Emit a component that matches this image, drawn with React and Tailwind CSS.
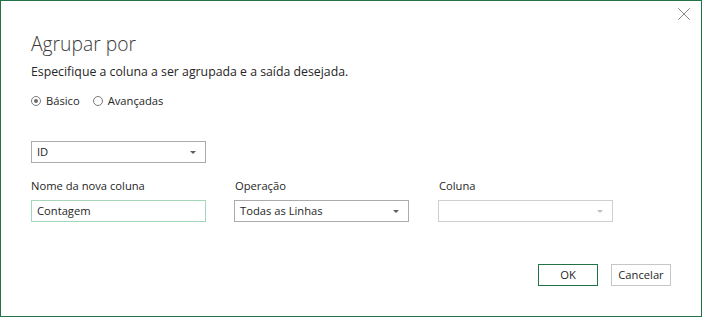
import { X } from "lucide-react";

const Arrow = ({ color = "#5f5f5f" }) => (
    <svg width="6" height="3" viewBox="0 0 6 3" className="shrink-0">
        <path d="M0 0H6L3 3Z" fill={color} />
    </svg>
);

const Radio = ({ checked, label }) => (
    <label className="flex items-center">
        <span className="w-[10px] h-[10px] rounded-full border border-[#7a7a7a] flex items-center justify-center bg-white">
            {checked && <span className="w-[4px] h-[4px] rounded-full bg-[#6b6b6b]" />}
        </span>
        <span className="ml-[5px]">{label}</span>
    </label>
);

const App = () => {
    return (
        <div className="w-[702px] h-[317px] bg-white border border-[#217346] relative flex flex-col px-[30px] text-[12.3px] text-[#262626] font-['Open_Sans',sans-serif]">
            <button className="absolute right-[6px] top-[2px] text-[#7a7a7a]">
                <X size={22} strokeWidth={1} />
            </button>

            <h1 className="mt-[28px] h-[30px] leading-[30px] text-[19.3px] font-light text-[#3a3a3a]">Agrupar por</h1>
            <p className="mt-[3px] h-[20px] leading-[20px]">Especifique a coluna a ser agrupada e a saída desejada.</p>

            <div className="mt-[9px] h-[20px] flex items-center gap-[13px] text-[11.2px]">
                <Radio checked label="Básico" />
                <Radio label="Avançadas" />
            </div>

            <div className="mt-[30px] w-[175px] h-[22px] border border-[#ababab] flex items-center justify-between pl-[5px] pr-[9px] text-[11.2px]">
                <span>ID</span>
                <Arrow />
            </div>

            <div className="mt-[13px] flex text-[11.2px]">
                <div className="w-[175px] h-[20px] leading-[20px]">Nome da nova coluna</div>
                <div className="w-[175px] ml-[29px] h-[20px] leading-[20px]">Operação</div>
                <div className="w-[175px] ml-[29px] h-[20px] leading-[20px]">Coluna</div>
            </div>

            <div className="mt-[4px] flex text-[11.2px]">
                <div className="w-[175px] h-[22px] border border-[#a3d7b9] flex items-center pl-[5px]">Contagem</div>
                <div className="w-[175px] h-[22px] ml-[28px] border border-[#ababab] flex items-center justify-between pl-[5px] pr-[9px]">
                    <span>Todas as Linhas</span>
                    <Arrow />
                </div>
                <div className="w-[175px] h-[22px] ml-[29px] border border-[#cfcfcf] flex items-center justify-end pr-[9px]">
                    <Arrow color="#c0c0c0" />
                </div>
            </div>

            <div className="mt-[42px] flex justify-end gap-[13px] text-[11.2px]">
                <button className="w-[60px] h-[22px] border border-[#217346] bg-white">OK</button>
                <button className="w-[60px] h-[22px] border border-[#c6c6c6] bg-white">Cancelar</button>
            </div>
        </div>
    );
};

export default App;
